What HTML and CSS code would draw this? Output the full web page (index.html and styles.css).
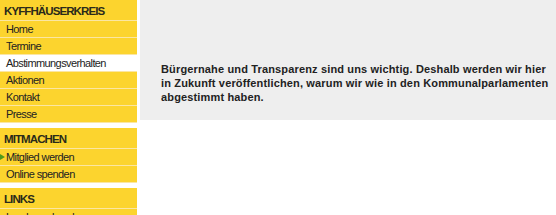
FILE: index.html
```html
<!DOCTYPE html>
<html lang="de">
<head>
    <meta charset="UTF-8">
    <title>Kyffhäuserkreis - Abstimmungsverhalten</title>
    <link rel="stylesheet" href="styles.css">
</head>
<body>
    <div class="page">
        <div class="sidebar">
            <div class="nav-block">
                <h2>KYFFHÄUSERKREIS</h2>
                <ul>
                    <li><a href="#">Home</a></li>
                    <li><a href="#">Termine</a></li>
                    <li class="active"><a href="#">Abstimmungsverhalten</a></li>
                    <li><a href="#">Aktionen</a></li>
                    <li><a href="#">Kontakt</a></li>
                    <li><a href="#">Presse</a></li>
                </ul>
            </div>
            <div class="nav-block">
                <h2>MITMACHEN</h2>
                <ul>
                    <li class="arrow"><a href="#">Mitglied werden</a></li>
                    <li><a href="#">Online spenden</a></li>
                </ul>
            </div>
            <div class="nav-block">
                <h2>LINKS</h2>
                <ul>
                    <li><a href="#">Landesverband</a></li>
                </ul>
            </div>
        </div>
        <div class="main">
            <div class="intro">
                <p>Bürgernahe und Transparenz sind uns wichtig. Deshalb werden wir hier in Zukunft veröffentlichen, warum wir wie in den Kommunalparlamenten abgestimmt haben.</p>
            </div>
        </div>
    </div>
</body>
</html>
```

FILE: styles.css
```css
body {
    margin: 0;
    background: #fff;
    font-family: "Liberation Sans", Arial, sans-serif;
    font-size: 11px;
    color: #222;
    overflow: hidden;
}
.page {
    display: flex;
    align-items: flex-start;
}
.sidebar {
    width: 137px;
    flex-shrink: 0;
}
.nav-block {
    margin-bottom: 5px;
}
.nav-block h2 {
    margin: 0;
    height: 21px;
    padding: 0 0 0 4px;
    box-sizing: border-box;
    background: #fcd42e;
    font-size: 11.5px;
    font-weight: bold;
    letter-spacing: -0.9px;
    line-height: 23px;
    color: #2a2a1a;
    border-bottom: 1px solid #fbe6a2;
}
.nav-block ul {
    list-style: none;
    margin: 0;
    padding: 0;
}
.nav-block li {
    height: 16px;
    background: #fcd42e;
    border-bottom: 1px solid #fbe6a2;
    position: relative;
}
.nav-block li a {
    display: block;
    padding-left: 6px;
    font-size: 11px;
    letter-spacing: -0.6px;
    line-height: 16px;
    color: #222;
    text-decoration: none;
}
.nav-block li.active {
    background: #fff;
}
.nav-block li.arrow::before {
    content: "";
    position: absolute;
    left: 0;
    top: 5px;
    border-left: 5px solid #4f9a1c;
    border-top: 3px solid transparent;
    border-bottom: 3px solid transparent;
}
.main {
    flex: 1;
    margin-left: 3px;
}
.intro {
    background: #eeeeee;
    height: 120px;
    box-sizing: border-box;
    padding: 62px 6px 0 21px;
}
.intro p {
    margin: 0;
    font-weight: bold;
    font-size: 11px;
    line-height: 14px;
    letter-spacing: 0.15px;
    color: #222;
}
```
